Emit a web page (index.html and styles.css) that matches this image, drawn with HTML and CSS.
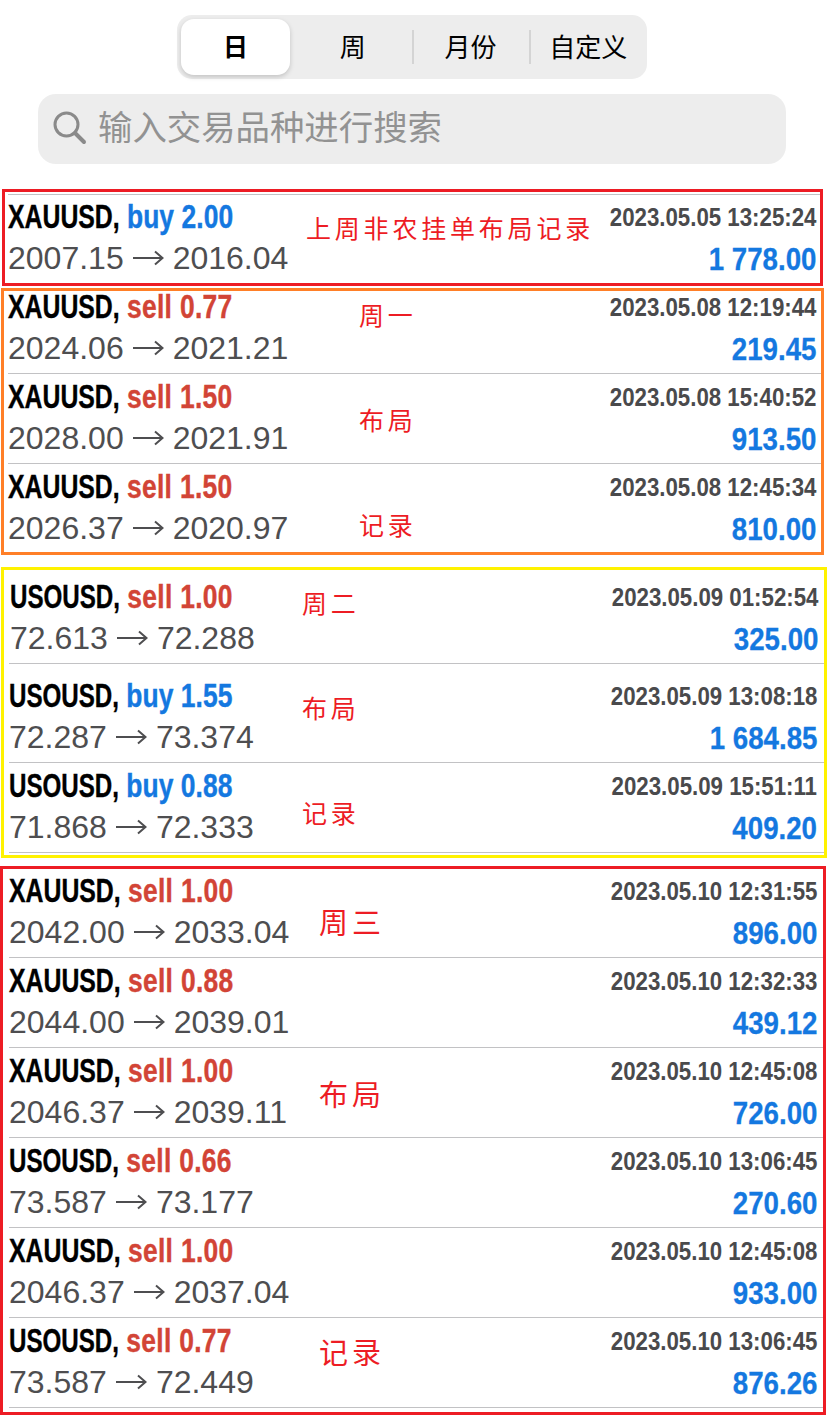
FILE: index.html
```html
<!DOCTYPE html>
<html lang="zh-CN">
<head>
    <meta charset="UTF-8">
    <title>交易记录</title>
    <link rel="stylesheet" href="styles.css">
</head>
<body>
<ul class="tab">
    <li class="selected">日</li>
    <li>周</li>
    <li>月份</li>
    <li>自定义</li>
</ul>
<div class="search">
    <svg class="search-icon" width="34" height="34" viewBox="0 0 34 34">
        <circle cx="13.5" cy="13.5" r="11.5"/>
        <path d="M22 22L31 31" stroke-width="4"/>
    </svg>
    <span>输入交易品种进行搜索</span>
</div>
<div id="list"></div>

<script src="list.js"></script>
</body>
</html>
```

FILE: styles.css
```css
* {
    margin: 0;
    padding: 0;
    box-sizing: border-box;
}

body {
    width: 828px;
    height: 1421px;
    padding-top: 15px;
    overflow: hidden;
    background-color: #fff;
    font-family: "Liberation Sans", "Noto Sans CJK SC", sans-serif;
}

ul {
    list-style: none;
}

.tab {
    display: flex;
    width: 470px;
    height: 64px;
    margin-left: 177px;
    padding: 4px 0 4px 4px;
    border-radius: 15px;
    background-color: #ededed;
}

.tab li {
    position: relative;
    width: 118px;
    height: 56px;
    line-height: 58px;
    text-align: center;
    font-size: 26px;
    color: #000;
}

.tab li.selected {
    width: 109px;
    margin-right: 4px;
    border-radius: 13px;
    background-color: #fff;
    box-shadow: 0 2px 5px rgba(0, 0, 0, 0.18);
    line-height: 57px;
    font-size: 25px;
    font-weight: bold;
}

.tab li:nth-child(n+3)::before {
    content: "";
    position: absolute;
    left: 0;
    top: 11px;
    width: 2px;
    height: 34px;
    background-color: #d4d4d4;
}

.search {
    display: flex;
    align-items: center;
    width: 748px;
    height: 70px;
    margin: 15px 0 25px 38px;
    padding: 0 0 2px 15px;
    border-radius: 18px;
    background-color: #ededed;
    font-size: 34.4px;
    line-height: 68px;
    color: #929292;
}

.search-icon {
    margin-right: 11px;
    fill: none;
    stroke: #8a8a8a;
    stroke-width: 3;
    stroke-linecap: round;
}

.group {
    position: relative;
    border: 3px solid #ed1c24;
}

.group-fri {
    width: 821px;
    height: 97px;
    margin: 0 0 2px 2px;
    padding: 2px 0 0 3px;
}

.group-mon {
    width: 823px;
    height: 267px;
    margin: 0 0 12px 1px;
    padding-left: 4px;
    border-color: #ff7f27;
}

.group-tue {
    width: 826px;
    height: 291px;
    margin: 0 0 8px 1px;
    padding-left: 5px;
    border-color: #fff200;
}

.group-wed {
    width: 826px;
    height: 549px;
    padding-left: 6px;
}

.row {
    display: flex;
    justify-content: space-between;
    align-items: flex-end;
    height: 90px;
    padding-right: 4px;
    border-bottom: 1px solid #c2c2c4;
}

.group-mon .row {
    padding-right: 5px;
}

.group-tue .row {
    padding-right: 7px;
}

.group-wed .row {
    padding-right: 6px;
}

.group-fri .row {
    border-top: 1px solid #c2c2c4;
    border-bottom-color: transparent;
}

.group-mon .row:nth-child(1) {
    height: 83px;
}

.group-mon .row:nth-child(3) {
    border-bottom-color: transparent;
}

.group-tue .row:nth-child(1) {
    height: 94px;
    padding: 0 6px 0 1px;
}

.group-tue .row:nth-child(2) {
    height: 99px;
}

.group-wed .row:nth-child(1) {
    height: 89px;
}

.left,
.right {
    height: 86px;
    white-space: nowrap;
}

.right {
    text-align: right;
}

.title,
.time,
.profit {
    height: 41px;
    line-height: 41px;
    font-weight: bold;
}

/* 窄体标题 */
.title {
    line-height: 39px;
    font-size: 33px;
    color: #000;
    -webkit-text-stroke: 0.4px;
    transform: scaleX(0.8);
    transform-origin: left;
}

.XAUUSD,
.USOUSD {
    display: inline-block;
    margin-right: -9px;
    transform: scaleX(0.94);
    transform-origin: left;
}

.USOUSD {
    margin-right: -13px;
    transform: scaleX(0.914);
}

.buy {
    letter-spacing: 0.1px;
    color: #1478e0;
}

.sell {
    letter-spacing: 0.4px;
    color: #d24436;
}

.price {
    display: flex;
    align-items: center;
    height: 41px;
    font-size: 32px;
    color: #4e4e50;
}

.arrow {
    width: 31px;
    height: 16px;
    margin: -2px 9px 0 9px;
    fill: none;
    stroke: #4e4e50;
    stroke-width: 2;
}

.time {
    font-size: 26px;
    color: #4a4a4c;
    transform: scaleX(0.856);
    transform-origin: right;
}

.profit {
    line-height: 42px;
    font-size: 32px;
    color: #1478e0;
    -webkit-text-stroke: 0.3px;
    transform: scaleX(0.865);
    transform-origin: right;
}

/* 红色批注 */
.note {
    position: absolute;
    font-family: KaiTi, "Noto Sans CJK SC", sans-serif;
    font-size: 25px;
    line-height: 30px;
    letter-spacing: 3.8px;
    color: #ed1c24;
    white-space: nowrap;
}

.group-wed .note {
    font-size: 29px;
    letter-spacing: 4px;
}
```

FILE: list.js
```js
var oList = document.getElementById('list');

var groups = [
    {
        name: 'fri',
        rows: [
            ['XAUUSD', 'buy', '2.00', '2007.15', '2016.04', '2023.05.05 13:25:24', '1 778.00']
        ],
        notes: [['上周非农挂单布局记录', 301, 20]]
    },
    {
        name: 'mon',
        rows: [
            ['XAUUSD', 'sell', '0.77', '2024.06', '2021.21', '2023.05.08 12:19:44', '219.45'],
            ['XAUUSD', 'sell', '1.50', '2028.00', '2021.91', '2023.05.08 15:40:52', '913.50'],
            ['XAUUSD', 'sell', '1.50', '2026.37', '2020.97', '2023.05.08 12:45:34', '810.00']
        ],
        notes: [['周一', 355, 8], ['布局', 355, 113], ['记录', 355, 218]]
    },
    {
        name: 'tue',
        rows: [
            ['USOUSD', 'sell', '1.00', '72.613', '72.288', '2023.05.09 01:52:54', '325.00'],
            ['USOUSD', 'buy', '1.55', '72.287', '73.374', '2023.05.09 13:08:18', '1 684.85'],
            ['USOUSD', 'buy', '0.88', '71.868', '72.333', '2023.05.09 15:51:11', '409.20']
        ],
        notes: [['周二', 298, 17], ['布局', 298, 122], ['记录', 298, 227]]
    },
    {
        name: 'wed',
        rows: [
            ['XAUUSD', 'sell', '1.00', '2042.00', '2033.04', '2023.05.10 12:31:55', '896.00'],
            ['XAUUSD', 'sell', '0.88', '2044.00', '2039.01', '2023.05.10 12:32:33', '439.12'],
            ['XAUUSD', 'sell', '1.00', '2046.37', '2039.11', '2023.05.10 12:45:08', '726.00'],
            ['USOUSD', 'sell', '0.66', '73.587', '73.177', '2023.05.10 13:06:45', '270.60'],
            ['XAUUSD', 'sell', '1.00', '2046.37', '2037.04', '2023.05.10 12:45:08', '933.00'],
            ['USOUSD', 'sell', '0.77', '73.587', '72.449', '2023.05.10 13:06:45', '876.26']
        ],
        notes: [['周三', 316, 37], ['布局', 316, 209], ['记录', 316, 467]]
    }
];

var arrow = '<svg class="arrow" viewBox="0 0 31 16"><path d="M0 8H29M22 1.5L29.5 8L22 14.5"/></svg>';

function rowHtml(r) {
    return '<div class="row">' +
        '<div class="left">' +
        '<p class="title"><span class="' + r[0] + '">' + r[0] + ',</span> <span class="' + r[1] + '">' + r[1] + ' ' + r[2] + '</span></p>' +
        '<p class="price"><span>' + r[3] + '</span>' + arrow + '<span>' + r[4] + '</span></p>' +
        '</div>' +
        '<div class="right">' +
        '<p class="time">' + r[5] + '</p>' +
        '<p class="profit">' + r[6] + '</p>' +
        '</div></div>';
}

var html = '';
for (var i = 0; i < groups.length; i++) {
    var g = groups[i];
    html += '<div class="group group-' + g.name + '">';
    for (var j = 0; j < g.rows.length; j++) {
        html += rowHtml(g.rows[j]);
    }
    for (var k = 0; k < g.notes.length; k++) {
        var n = g.notes[k];
        html += '<span class="note" style="left:' + n[1] + 'px;top:' + n[2] + 'px">' + n[0] + '</span>';
    }
    html += '</div>';
}
oList.innerHTML = html;
```
